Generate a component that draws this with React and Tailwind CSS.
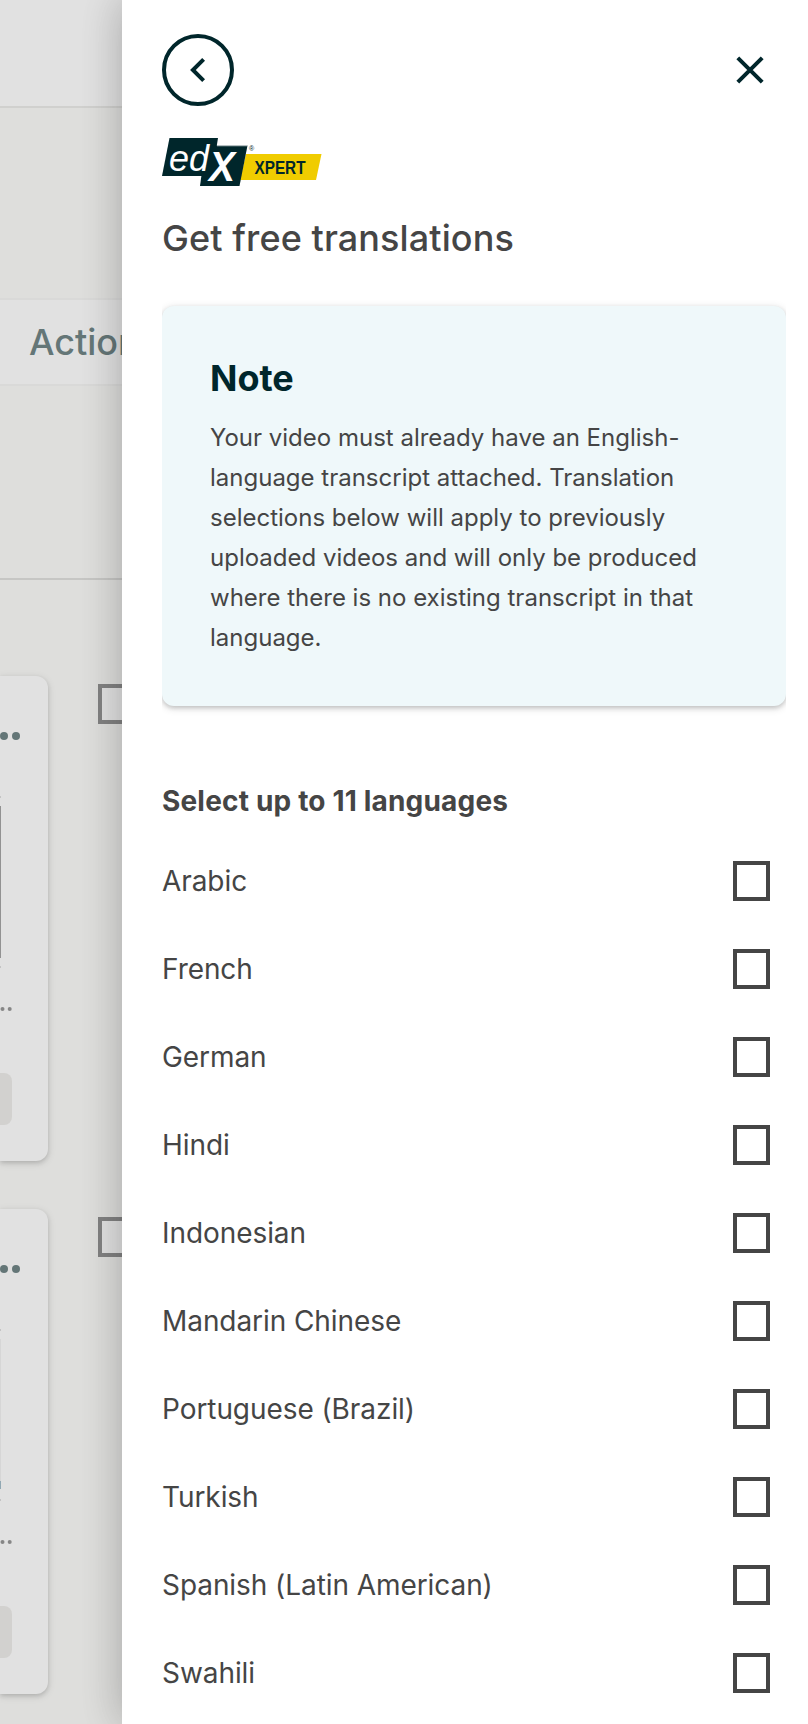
const languages = [
  "Arabic",
  "French",
  "German",
  "Hindi",
  "Indonesian",
  "Mandarin Chinese",
  "Portuguese (Brazil)",
  "Turkish",
  "Spanish (Latin American)",
  "Swahili",
];

function VideoCard({ thumbnail }) {
  return (
    <div className="flex h-[485px] w-12 flex-col rounded-r-xl bg-[#e1e1e1] shadow-[0_2px_4px_rgba(0,0,0,0.12),0_2px_8px_rgba(0,0,0,0.12)]">
      <svg className="mt-14 h-2 w-5" viewBox="0 0 20 8" fill="#647677">
        <circle cx="4" cy="4" r="4" />
        <circle cx="16" cy="4" r="4" />
      </svg>
      <div className="mt-14 h-0.5 w-px bg-[#c4c4c4]" />
      <div className="mt-2 h-[152px] w-px">{thumbnail}</div>
      <div className="mt-2 h-0.5 w-px bg-[#c4c4c4]" />
      <svg className="mt-[39px] h-1 w-3.5 shrink-0" viewBox="0 0 14 4" fill="#868686">
        <circle cx="2.5" cy="2" r="2" />
        <circle cx="9.7" cy="2" r="2" />
      </svg>
      <div className="mt-[62px] h-[52px] w-3 rounded-r-lg bg-[#d2d1cf]" />
    </div>
  );
}

function VideoRow({ thumbnail }) {
  return (
    <div className="flex items-start">
      <VideoCard thumbnail={thumbnail} />
      <div className="mt-2 ml-[50px] h-10 w-6 border-4 border-r-0 border-[#828282] bg-[#e1e1e1]" />
    </div>
  );
}

function Backdrop() {
  return (
    <div className="flex w-[122px] shrink-0 flex-col overflow-hidden bg-[#dededc]">
      <div className="h-[108px] shrink-0 border-b-2 border-[#d0d0ce] bg-[#e1e1e1]" />
      <div className="mt-[190px] flex h-[88px] shrink-0 items-center border-y-2 border-[#d9d9d8] bg-[#e1e1e1] pl-[29px]">
        <span className="text-4xl font-medium text-[#647677]">Actions</span>
      </div>
      <div className="mt-48 h-0.5 shrink-0 bg-[#c6c6c4]" />
      <div className="mt-24 flex flex-col gap-12">
        <VideoRow thumbnail={<div className="h-full bg-[#929292]" />} />
        <VideoRow
          thumbnail={
            <div className="flex h-[150px] flex-col justify-end bg-[#d6d6d6]">
              <div className="h-2 bg-[#91a8b3]" />
            </div>
          }
        />
      </div>
    </div>
  );
}

function Logo() {
  return (
    <svg className="h-12 w-40" viewBox="0 0 160 48">
      <path d="M84 16H159.5L154 42H78Z" fill="#f0cc00" />
      <path d="M7.5 0H56L50 38H0Z" fill="#00262b" />
      <path d="M43.5 7.5H85.5L77.5 48H38Z" fill="#00262b" />
      <path d="M55 7.8H85" stroke="#fff" strokeWidth="1" opacity=".6" />
      <text x="7" y="33" fontSize="36" fontStyle="italic" fontFamily="Liberation Sans" fill="#fff" textLength="40" lengthAdjust="spacingAndGlyphs">ed</text>
      <text x="47" y="43" fontSize="42" fontStyle="italic" fontWeight="700" fontFamily="Liberation Sans" fill="#fff" textLength="26" lengthAdjust="spacingAndGlyphs">X</text>
      <text x="87" y="13" fontSize="7" fontFamily="Liberation Sans" fill="#00262b">®</text>
      <text x="92.5" y="35.5" fontSize="17.5" fontWeight="700" fontFamily="Liberation Sans" fill="#00262b" textLength="51" lengthAdjust="spacingAndGlyphs">XPERT</text>
    </svg>
  );
}

function Drawer() {
  return (
    <div className="relative flex grow flex-col bg-white pt-[34px] pl-10 shadow-[0_0_40px_rgba(0,0,0,0.15),0_0_40px_rgba(0,0,0,0.12)]">
      <div className="flex items-center justify-between pr-11">
        <button className="flex size-[72px] items-center justify-center rounded-full border-4 border-[#00262b]">
          <svg className="size-16" viewBox="0 0 64 64" fill="none" stroke="#00262b" strokeWidth="4">
            <path d="M37.6 21.3L26.9 32L37.6 42.7" />
          </svg>
        </button>
        <svg className="size-7" viewBox="0 0 28 28" fill="none" stroke="#00262b" strokeWidth="4">
          <path d="M1.8 1.8L26.2 26.2M26.2 1.8L1.8 26.2" />
        </svg>
      </div>
      <div className="mt-8 flex h-12">
        <Logo />
      </div>
      <h1 className="mt-[30px] text-4xl leading-[44px] font-medium tracking-[0.1px]">Get free translations</h1>
      <div className="-my-5 mr-[22px] overflow-hidden py-5">
        <div className="mt-[46px] h-[400px] rounded-xl bg-[#eff8fa] px-12 pt-[50px] shadow-[0_2px_4px_rgba(0,0,0,0.15),0_2px_8px_rgba(0,0,0,0.15)]">
          <h2 className="text-4xl leading-[44px] font-bold text-[#00262b]">Note</h2>
          <p className="mt-[18px] text-2xl leading-10">
            Your video must already have an English-
            <br />
            language transcript attached. Translation
            <br />
            selections below will apply to previously
            <br />
            uploaded videos and will only be produced
            <br />
            where there is no existing transcript in that
            <br />
            language.
          </p>
        </div>
      </div>
      <h3 className="mt-[75px] text-[28px] leading-10 font-bold tracking-[0.18px]">Select up to 11 languages</h3>
      <ul className="mt-4 mr-[38px]">
        {languages.map((name) => (
          <li key={name} className="flex h-[88px] items-center justify-between text-[28px] tracking-[-0.07px]">
            <span>{name}</span>
            <span className="h-10 w-[37px] border-4 border-[#454545]" />
          </li>
        ))}
      </ul>
    </div>
  );
}

export default function App() {
  return (
    <div className="flex h-[1724px] w-[808px] overflow-hidden font-['Inter',sans-serif] text-[#454545]">
      <Backdrop />
      <Drawer />
    </div>
  );
}
